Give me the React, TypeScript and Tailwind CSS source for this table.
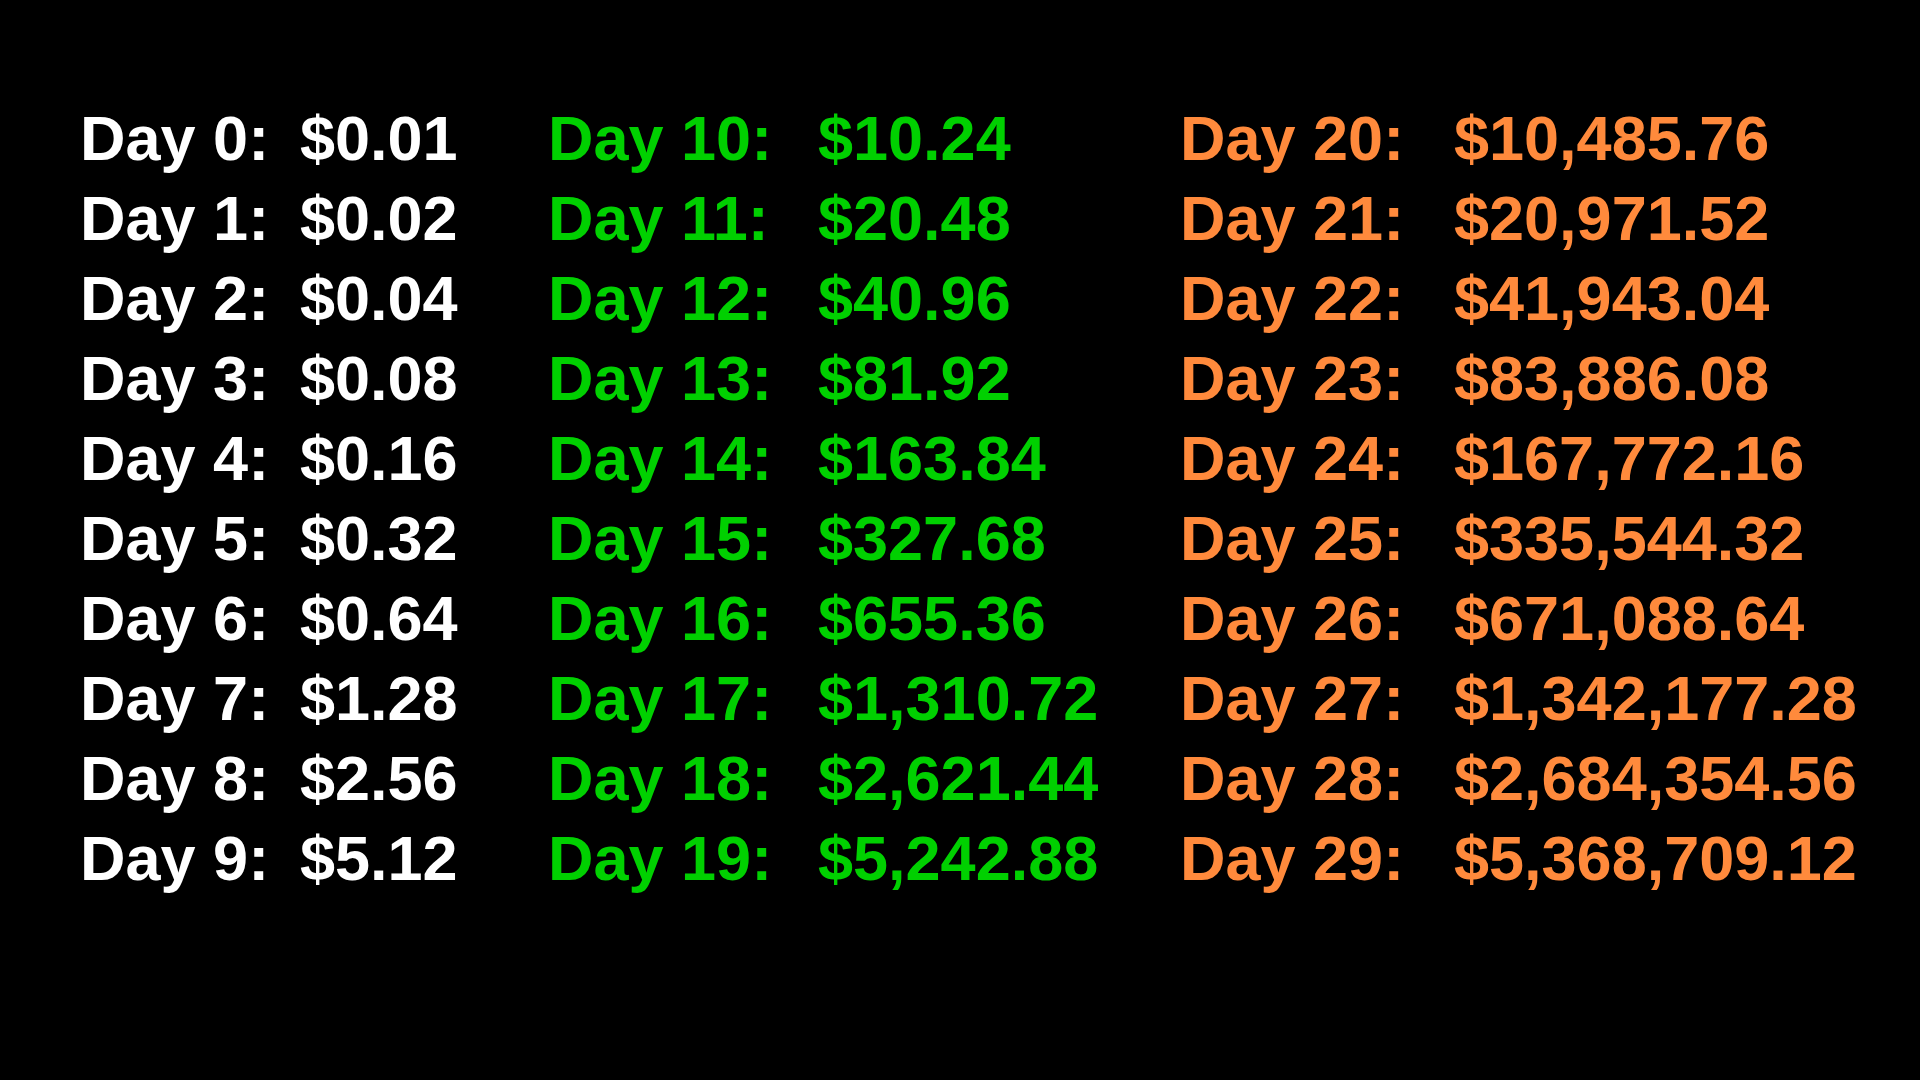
const rows = (start: number) =>
  Array.from({ length: 10 }, (_, i) => {
    const day = start + i;
    const cents = Math.pow(2, day);
    const value = (cents / 100).toLocaleString("en-US", {
      minimumFractionDigits: 2,
      maximumFractionDigits: 2,
    });
    return { day, value: `$${value}` };
  });

const Column = ({
  start,
  labelWidth,
  className,
}: {
  start: number;
  labelWidth: string;
  className: string;
}) => (
  <div className={className}>
    {rows(start).map((r) => (
      <div key={r.day} className="flex h-[80px] items-center whitespace-nowrap">
        <span className={`${labelWidth} shrink-0`}>Day {r.day}:</span>
        <span>{r.value}</span>
      </div>
    ))}
  </div>
);

export default function App() {
  return (
    <div className="h-[1080px] w-[1920px] overflow-hidden bg-black pl-[80px] pt-[98px] font-['Liberation_Sans',Arial,sans-serif] text-[63px] font-bold leading-[80px]">
      <div className="flex">
        <Column start={0} labelWidth="w-[220px]" className="w-[468px] shrink-0 text-white" />
        <Column start={10} labelWidth="w-[270px]" className="w-[632px] shrink-0 text-[#00d000]" />
        <Column start={20} labelWidth="w-[274px]" className="shrink-0 text-[#ff8a3c]" />
      </div>
    </div>
  );
}
